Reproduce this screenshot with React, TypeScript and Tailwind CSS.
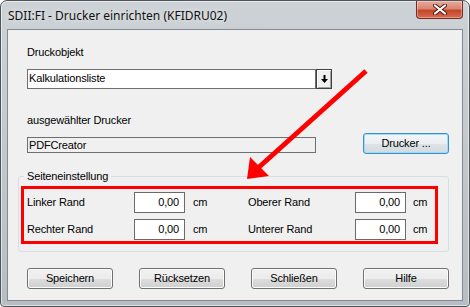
import React from 'react'

const ui = "font-['Liberation_Sans',Arial,sans-serif] text-[11px] leading-[13px] tracking-[-0.15px] text-black"

function DlgButton({ label, focused }: { label: string; focused?: boolean }) {
  return (
    <button
      type="button"
      className={
        focused
          ? `${ui} w-[86px] h-[21px] rounded-[3px] border border-[#3c8fcf] bg-[linear-gradient(to_bottom,#f4f7f9_0%,#eaeef1_50%,#dde3e7_51%,#d3dade_100%)] shadow-[inset_0_0_0_1px_#9fdcf5] flex items-center justify-center`
          : `${ui} w-[86px] h-[21px] rounded-[3px] border border-[#707070] bg-[linear-gradient(to_bottom,#f2f2f2_0%,#ebebeb_50%,#dddddd_51%,#cfcfcf_100%)] shadow-[inset_0_0_0_1px_#fcfcfc] flex items-center justify-center`
      }
    >
      {label}
    </button>
  )
}

function MarginField({ label, value }: { label: string; value: string }) {
  return (
    <>
      <span className="whitespace-nowrap">{label}</span>
      <div className="h-[21px] border border-[#6a6a6a] bg-white flex items-center justify-end pr-[5px]">
        {value}
      </div>
    </>
  )
}

export default function App() {
  return (
    <div className="relative w-[470px] h-[307px] overflow-hidden">
      {/* window frame */}
      <div className="w-full h-full flex flex-col px-[6px] pb-[5px] rounded-t-[7px] rounded-b-[4px] border border-[#50555a] bg-[radial-gradient(ellipse_at_52%_35%,#a4aab0_0%,transparent_30%),linear-gradient(to_bottom,#cdd2d6,#b7bdc2)] shadow-[inset_0_0_0_1px_rgba(255,255,255,0.55)]">
        {/* title bar */}
        <div className="h-[28px] flex justify-between items-start shrink-0">
          <span className="pl-[1px] pt-[8px] font-['Noto_Sans',sans-serif] text-[12px] leading-[14px] text-[#111] [text-shadow:0_0_6px_rgba(255,255,255,0.9)] whitespace-nowrap">
            SDII:FI - Drucker einrichten (KFIDRU02)
          </span>
          <div className="w-[47px] h-[18px] rounded-b-[4px] border border-t-0 border-[#7a2a1e] bg-[linear-gradient(to_bottom,#e9a99b_0%,#d98672_45%,#c3472c_55%,#d76a4e_100%)] shadow-[inset_0_0_0_1px_rgba(255,255,255,0.35)] flex items-center justify-center">
            <svg width="14" height="11" viewBox="0 0 14 11">
              <path d="M2 1.5 L12 9.5 M12 1.5 L2 9.5" stroke="#4a1a14" strokeWidth="4" strokeLinecap="round" />
              <path d="M2 1.5 L12 9.5 M12 1.5 L2 9.5" stroke="#ffffff" strokeWidth="2.2" strokeLinecap="round" />
            </svg>
          </div>
        </div>

        {/* client area */}
        <div className={`${ui} flex-1 flex flex-col border border-[#838a91] bg-[#f0f0f0] pt-[16px]`}>
          <div className="pl-[19px]">Druckobjekt</div>
          <div className="pl-[19px] mt-[10px] flex">
            <div className="w-[289px] h-[20px] border border-[#6f6f6f] bg-white flex items-center pl-[1px] pb-[2px]">
              Kalkulationsliste
            </div>
            <div className="w-[16px] h-[20px] border border-[#404040] bg-[#f0f0f0] shadow-[inset_1px_1px_0_#ffffff,inset_-1px_-1px_0_#a0a0a0] flex items-center justify-center">
              <svg width="7" height="8" viewBox="0 0 7 8">
                <path d="M2.5 0 H4.5 V4 H7 L3.5 8 L0 4 H2.5 Z" fill="#000" />
              </svg>
            </div>
          </div>

          <div className="pl-[19px] mt-[25px]">ausgewählter Drucker</div>
          <div className="pl-[19px] pr-[13px] mt-[6px] flex justify-between items-start">
            <div className="mt-[4px] w-[289px] h-[16px] border border-[#6f6f6f] bg-[#f0f0f0] flex items-center pl-[1px]">
              PDFCreator
            </div>
            <DlgButton label="Drucker ..." focused />
          </div>

          <fieldset className="ml-[10px] mt-[16px] w-[431px] rounded-[3px] border border-[#d5dfe5] pl-[2px] pt-[3px] pb-[7px]">
            <legend className="ml-[3px] px-[3px]">Seiteneinstellung</legend>
            <div className="w-[417px] border-[3px] border-[#ff0000] pl-[3px] pt-[3px] pb-[1px] grid grid-cols-[107px_51px_63px_107px_51px_1fr] gap-y-[6px] items-center">
              <MarginField label="Linker Rand" value="0,00" />
              <span className="pl-[8px]">cm</span>
              <MarginField label="Oberer Rand" value="0,00" />
              <span className="pl-[7px]">cm</span>
              <MarginField label="Rechter Rand" value="0,00" />
              <span className="pl-[8px]">cm</span>
              <MarginField label="Unterer Rand" value="0,00" />
              <span className="pl-[7px]">cm</span>
            </div>
          </fieldset>

          <div className="pl-[19px] pr-[13px] mt-[16px] flex justify-between">
            <DlgButton label="Speichern" />
            <DlgButton label="Rücksetzen" />
            <DlgButton label="Schließen" />
            <DlgButton label="Hilfe" />
          </div>
        </div>
      </div>

      {/* red annotation arrow */}
      <svg className="absolute inset-0 pointer-events-none" width="470" height="307" viewBox="0 0 470 307">
        <line x1="366" y1="71" x2="258" y2="168" stroke="#ff0000" strokeWidth="5" />
        <path d="M247 179 L250 157 L269 176 Z" fill="#ff0000" />
      </svg>
    </div>
  )
}
